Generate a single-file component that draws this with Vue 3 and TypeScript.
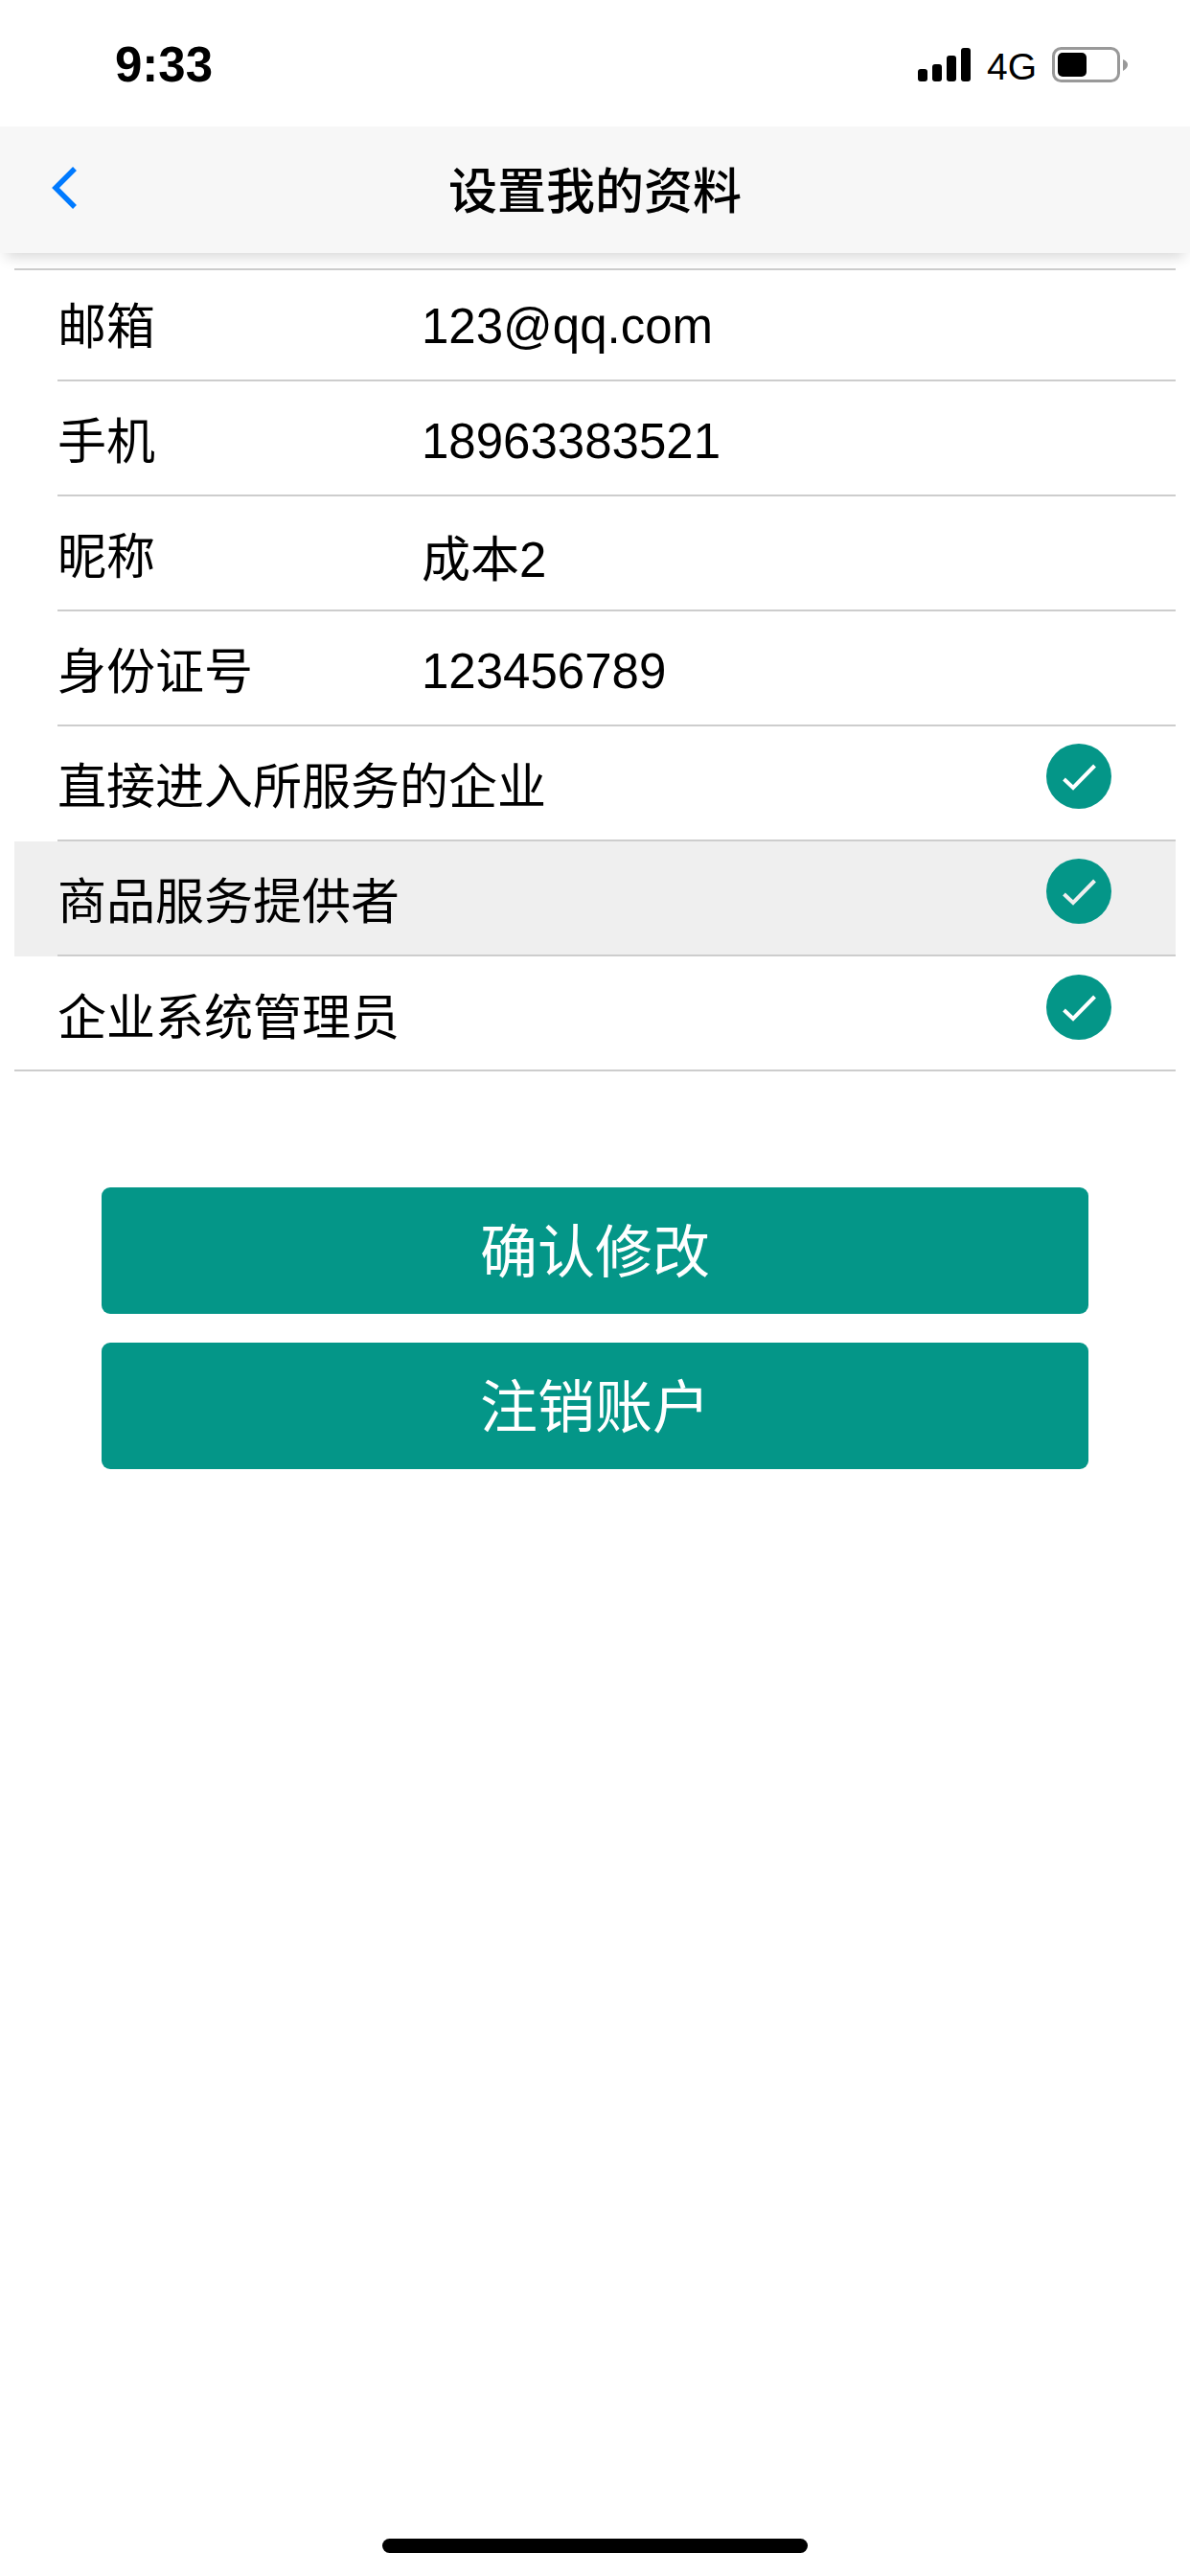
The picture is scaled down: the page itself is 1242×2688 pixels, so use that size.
<template>
  <div class="page">
    <div class="status-bar">
      <span class="time">9:33</span>
      <div class="status-right">
        <svg class="signal" width="55" height="35" viewBox="0 0 55 35">
          <rect x="0" y="22" width="10" height="13" rx="3" />
          <rect x="15" y="17" width="10" height="18" rx="3" />
          <rect x="30" y="8" width="10" height="27" rx="3" />
          <rect x="45" y="0" width="10" height="35" rx="3" />
        </svg>
        <span class="network">4G</span>
        <svg class="battery" width="80" height="37" viewBox="0 0 80 37">
          <rect x="1.500" y="1.500" width="68" height="34" rx="8" fill="none" stroke="#999" stroke-width="3" />
          <rect x="6" y="6" width="30" height="25" rx="5" fill="#000" />
          <path d="M74 13 Q79 15 79 18.500 Q79 22 74 25 Z" fill="#999" />
        </svg>
      </div>
    </div>

    <header class="nav">
      <svg class="back" width="30" height="46" viewBox="0 0 30 46">
        <path d="M26 3 L6 23 L26 43" fill="none" stroke="#007aff" stroke-width="5.500" />
      </svg>
      <h1 class="title">设置我的资料</h1>
    </header>

    <ul class="list">
      <li
        v-for="row in rows"
        :key="row.label"
        class="row"
        :class="{ active: row.active }"
      >
        <div class="row-inner">
          <span class="label" :class="{ wide: row.checked }">{{ row.label }}</span>
          <span v-if="row.value" class="value">{{ row.value }}</span>
          <svg v-if="row.checked" class="check" width="68" height="68" viewBox="0 0 68 68">
            <circle cx="34" cy="34" r="34" fill="#049688" />
            <path d="M18.500 37 L28 46 L50.500 23" fill="none" :stroke="row.active ? '#efefef' : '#fff'" stroke-width="4" />
          </svg>
        </div>
      </li>
    </ul>

    <div class="actions">
      <button class="btn" type="button">确认修改</button>
      <button class="btn" type="button">注销账户</button>
    </div>

    <div class="home-indicator"></div>
  </div>
</template>

<script setup lang="ts">
interface Row {
  label: string
  value?: string
  checked?: boolean
  active?: boolean
}

const rows: Row[] = [
  { label: '邮箱', value: '123@qq.com' },
  { label: '手机', value: '18963383521' },
  { label: '昵称', value: '成本2' },
  { label: '身份证号', value: '123456789' },
  { label: '直接进入所服务的企业', checked: true },
  { label: '商品服务提供者', checked: true, active: true },
  { label: '企业系统管理员', checked: true }
]
</script>

<style>
html,
body {
  margin: 0;
  background: #fff;
}
</style>

<style scoped>
.page {
  display: flex;
  flex-direction: column;
  width: 1242px;
  height: 2688px;
  overflow: hidden;
  background: #fff;
  color: #000;
  font-family: "Liberation Sans", "Noto Sans CJK SC", sans-serif;
}

.status-bar {
  display: flex;
  align-items: center;
  justify-content: space-between;
  height: 132px;
  padding: 3px 64px 0 120px;
  box-sizing: border-box;
  flex-shrink: 0;
}

.time {
  font-size: 51px;
  font-weight: 700;
}

.status-right {
  display: flex;
  align-items: center;
}

.signal {
  fill: #000;
  margin-right: 17px;
}

.network {
  padding-top: 4px;
  font-size: 39px;
  margin-right: 16px;
}

.nav {
  position: relative;
  z-index: 1;
  display: flex;
  align-items: center;
  justify-content: center;
  height: 132px;
  flex-shrink: 0;
  background: #f7f7f7;
  box-shadow: 0 10px 14px -6px rgba(0, 0, 0, 0.16);
}

.back {
  position: absolute;
  left: 52px;
  top: 41px;
}

.title {
  margin: 0;
  padding-bottom: 4px;
  font-size: 51px;
  font-weight: 500;
}

.list {
  list-style: none;
  margin: 16px 15px 0;
  padding: 0;
  border-top: 2px solid #cdcdcd;
  border-bottom: 2px solid #cdcdcd;
}

.row {
  display: flow-root;
  height: 120px;
  padding-left: 45px;
}

.row:first-child {
  height: 116px;
}

/* first row keeps the 120px rhythm, its top just sits under the list border */
.row:first-child .row-inner {
  height: 120px;
  margin-top: -4px;
}

.row:last-child {
  height: 118px;
}

.row.active {
  background: #efefef;
}

.row-inner {
  display: flex;
  align-items: center;
  height: 100%;
  box-sizing: border-box;
  border-bottom: 2px solid #cdcdcd;
  font-size: 51px;
}

.row:last-child .row-inner {
  height: 120px;
  border-bottom: 0;
}

.label {
  width: 380px;
  flex-shrink: 0;
}

.label.wide {
  width: auto;
  flex: 1;
}

.value {
  padding-top: 6px;
}

.check {
  margin: -14px 67px 0 0;
}

.actions {
  display: flex;
  flex-direction: column;
  gap: 30px;
  margin: 121px 106px 0;
}

.btn {
  height: 132px;
  padding: 0 0 8px;
  border: 0;
  border-radius: 9px;
  background: #049688;
  color: #fff;
  font-family: inherit;
  font-size: 60px;
}

.home-indicator {
  width: 444px;
  height: 15px;
  margin: auto auto 24px;
  border-radius: 8px;
  background: #000;
}
</style>
